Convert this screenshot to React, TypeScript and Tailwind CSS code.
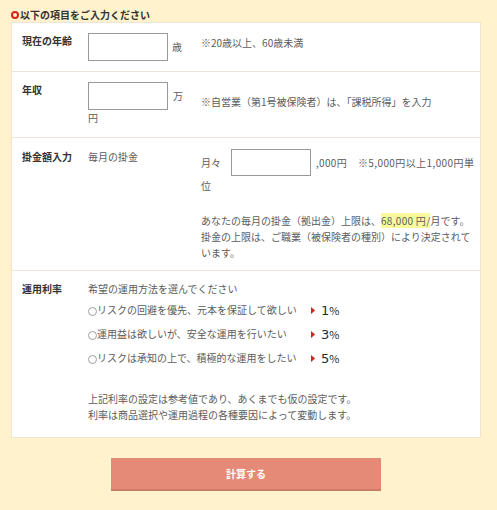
import * as React from 'react';

const FONT = "font-['Noto_Sans_CJK_JP','Noto_Sans',sans-serif]";

function TextBox({ h = 'h-[28px]' }: { h?: string }) {
  return <span className={`block w-[80px] ${h} shrink-0 border border-[#999] bg-white`} />;
}

function Arrow() {
  return (
    <svg width="4" height="7" viewBox="0 0 4 7" className="shrink-0">
      <polygon points="0,0 4,3.5 0,7" fill="#d0211d" />
    </svg>
  );
}

const OPTIONS = [
  { label: 'リスクの回避を優先、元本を保証して欲しい', rate: '1' },
  { label: '運用益は欲しいが、安全な運用を行いたい', rate: '3' },
  { label: 'リスクは承知の上で、積極的な運用をしたい', rate: '5' },
];

export default function App() {
  return (
    <div className={`min-h-[510px] w-full bg-[#fff2cc] px-[11px] pt-[7px] pb-[19px] text-[10px] leading-[16px] text-[#5c5c5c] ${FONT}`}>
      <div className="flex h-[15px] items-center gap-[1px] font-bold text-[#333]">
        <span className="block h-[8px] w-[8px] rounded-full border-2 border-[#d8261d]" />
        <span className="leading-[15px]">以下の項目をご入力ください</span>
      </div>

      <div className="w-[470px] border border-[#f0e4d6] bg-white">
        {/* 現在の年齢 */}
        <div className="flex border-b border-[#f0e4d6] pl-[10px] pt-[10px] pb-[10px]">
          <div className="w-[66px] font-bold text-[#333]">現在の年齢</div>
          <div className="flex w-[113px] items-center">
            <TextBox />
            <span className="ml-[4px]">歳</span>
          </div>
          <div className="pt-[2px]">※20歳以上、60歳未満</div>
        </div>

        {/* 年収 */}
        <div className="flex border-b border-[#f0e4d6] pl-[10px] pt-[10px] pb-[11px]">
          <div className="w-[66px] font-bold text-[#333]">年収</div>
          <div className="flex w-[113px] flex-col">
            <div className="flex items-center">
              <TextBox />
              <span className="ml-[5px]">万</span>
            </div>
            <span>円</span>
          </div>
          <div className="pt-[12px]">※自営業（第1号被保険者）は、「課税所得」を入力</div>
        </div>

        {/* 掛金額入力 */}
        <div className="flex border-b border-[#f0e4d6] pl-[10px] pt-[11px] pb-[9px]">
          <div className="w-[66px] font-bold text-[#333]">掛金額入力</div>
          <div className="w-[113px]">毎月の掛金</div>
          <div className="flex flex-col">
            <div className="flex items-center">
              <span>月々</span>
              <span className="ml-[10px]">
                <TextBox h="h-[27px]" />
              </span>
              <span className="ml-[5px] tracking-[0.3px]">,000円</span>
              <span className="ml-[11px] tracking-[0.4px]">※5,000円以上1,000円単</span>
            </div>
            <span className="mt-[2px]">位</span>
            <p className="mt-[19px]">
              あなたの毎月の掛金（拠出金）上限は、
              <span className="bg-[#f9fa9c] tracking-[0.3px]">68,000 円/</span>月です。
              <br />
              掛金の上限は、ご職業（被保険者の種別）により決定されて
              <br />
              います。
            </p>
          </div>
        </div>

        {/* 運用利率 */}
        <div className="flex pl-[10px] pt-[10px] pb-[14px]">
          <div className="w-[66px] font-bold text-[#333]">運用利率</div>
          <div className="flex flex-col">
            <span>希望の運用方法を選んでください</span>
            <div className="mt-[1px] flex flex-col">
              {OPTIONS.map((o) => (
                <div key={o.rate} className="flex h-[24px] items-center">
                  <span className="mt-[2px] block h-[9px] w-[9px] shrink-0 rounded-full border border-[#a0a0a0]" />
                  <span className="w-[214px]">{o.label}</span>
                  <Arrow />
                  <span className="ml-[6px] flex items-baseline text-[#262b3a]">
                    <span className="font-['DejaVu_Sans',sans-serif] text-[13px] leading-[16px]">{o.rate}</span>
                    <span className="text-[11px] leading-[16px]">%</span>
                  </span>
                </div>
              ))}
            </div>
            <p className="mt-[21px]">
              上記利率の設定は参考値であり、あくまでも仮の設定です。
              <br />
              利率は商品選択や運用過程の各種要因によって変動します。
            </p>
          </div>
        </div>
      </div>

      <div className="w-[470px] pt-[20px]">
        <button
          type="button"
          className="mx-auto flex h-[33px] w-[270px] items-center justify-center border-b-2 border-[#cd7a67] bg-[#e48a76] text-[10px] font-bold text-white"
        >
          計算する
        </button>
      </div>
    </div>
  );
}
